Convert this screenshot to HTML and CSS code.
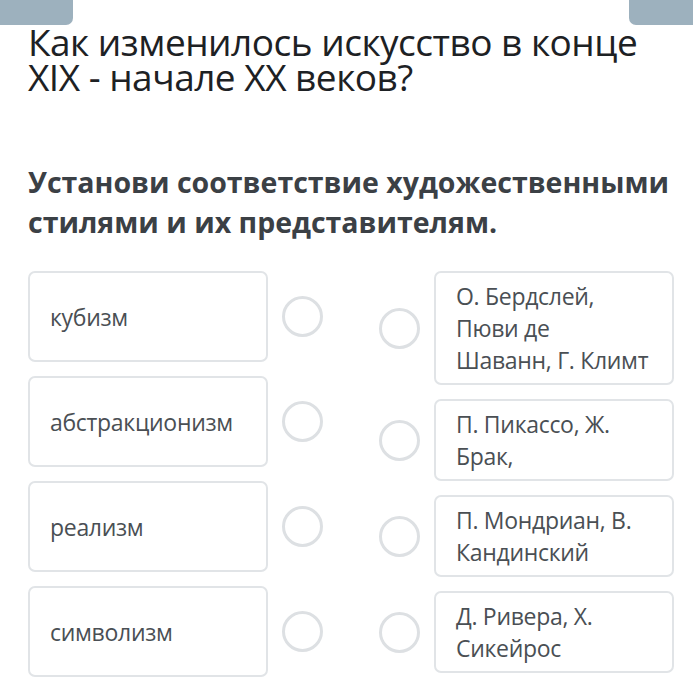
FILE: index.html
```html
<!DOCTYPE html>
<html lang="ru">
<head>
    <meta charset="UTF-8">
    <meta name="viewport" content="width=device-width, initial-scale=1.0">
    <title>Установи соответствие</title>
    <link rel="stylesheet" href="styles.css">
</head>
<body>
    <!-- Верхние вкладки -->
    <div class="top-bar">
        <div class="tab tab-left"></div>
        <div class="tab tab-right"></div>
    </div>

    <h1 class="question">Как изменилось искусство в конце XIX - начале XX веков?</h1>
    <h2 class="task">Установи соответствие художественными стилями и их представителям.</h2>

    <!-- Пары для сопоставления -->
    <div class="match">
        <div class="column column-left">
            <div class="row">
                <div class="card card-left">кубизм</div>
                <span class="dot"></span>
            </div>
            <div class="row">
                <div class="card card-left">абстракционизм</div>
                <span class="dot"></span>
            </div>
            <div class="row">
                <div class="card card-left">реализм</div>
                <span class="dot"></span>
            </div>
            <div class="row">
                <div class="card card-left">символизм</div>
                <span class="dot"></span>
            </div>
        </div>

        <div class="column column-right">
            <div class="row">
                <span class="dot"></span>
                <div class="card card-right">О. Бердслей, Пюви де<br>Шаванн, Г. Климт</div>
            </div>
            <div class="row">
                <span class="dot"></span>
                <div class="card card-right">П. Пикассо, Ж. Брак,</div>
            </div>
            <div class="row">
                <span class="dot"></span>
                <div class="card card-right">П. Мондриан, В. Кандинский</div>
            </div>
            <div class="row">
                <span class="dot"></span>
                <div class="card card-right">Д. Ривера, Х. Сикейрос</div>
            </div>
        </div>
    </div>
</body>
</html>
```

FILE: styles.css
```css
/* Общие настройки */
body {
    margin: 0;
    font-family: "Open Sans", "Noto Sans", sans-serif;
    background: #fff;
    color: #1f2326;
}

/* Вкладки сверху */
.top-bar {
    display: flex;
    justify-content: space-between;
    height: 25px;
}

.tab {
    background: #9db1be;
    height: 25px;
}

.tab-left {
    width: 73px;
    border-bottom-right-radius: 7px;
}

.tab-right {
    width: 64px;
    border-bottom-left-radius: 7px;
}

/* Заголовки */
.question {
    margin: -1px 20px 0 28px;
    font-size: 37px;
    font-weight: 400;
    line-height: 35px;
    letter-spacing: -0.5px;
    color: #1d2124;
}

.task {
    margin: 68px 10px 0 28px;
    font-size: 28.5px;
    font-weight: 700;
    line-height: 40px;
    color: #3b4045;
}

/* Сопоставление */
.match {
    display: flex;
    gap: 56px;
    margin: 29px 0 0 28px;
}

.column {
    display: flex;
    flex-direction: column;
    gap: 14px;
}

.row {
    display: flex;
    align-items: center;
    gap: 14px;
}

.card {
    box-sizing: border-box;
    width: 240px;
    border: 2px solid #e1e4e7;
    border-radius: 7px;
    padding: 0 20px;
    font-size: 23px;
    letter-spacing: -0.3px;
    color: #4a4f54;
}

.card-left {
    height: 91px;
    display: flex;
    align-items: center;
}

.card-right {
    padding: 7px 20px;
    line-height: 32px;
}

.dot {
    box-sizing: border-box;
    width: 41px;
    height: 41px;
    border: 3px solid #dde0e3;
    border-radius: 50%;
    flex-shrink: 0;
}
```
